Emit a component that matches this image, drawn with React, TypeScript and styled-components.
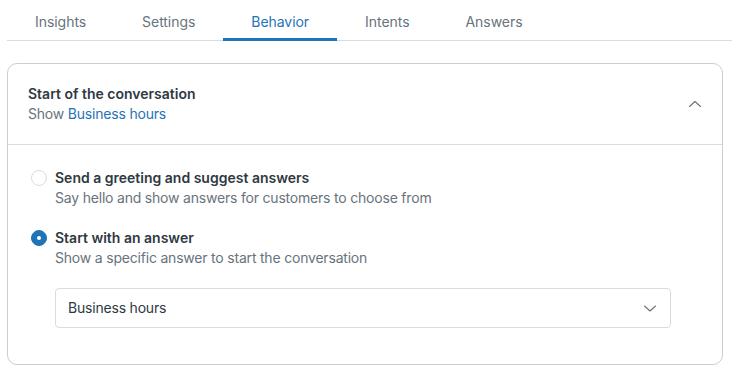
import styled, { createGlobalStyle } from "styled-components";

const GlobalStyle = createGlobalStyle`
  body {
    margin: 0;
    background: #fff;
    font-family: Inter, "Noto Sans", sans-serif;
    font-size: 14px;
    line-height: 20px;
    color: #2f3941;
    letter-spacing: -0.2px;
  }
`;

const Page = styled.div`
  padding: 0 9px 0 7px;
`;

const TabList = styled.div`
  display: flex;
  height: 41px;
  margin-right: -9px;
  border-bottom: 1px solid #d8dcde;
  box-sizing: border-box;
`;

const Tab = styled.div<{ $active?: boolean }>`
  display: flex;
  align-items: center;
  padding: 5px 28px 0;
  margin-bottom: -1px;
  letter-spacing: -0.05px;
  color: ${(p) => (p.$active ? "#1f73b7" : "#68737d")};
  border-bottom: 3px solid ${(p) => (p.$active ? "#1f73b7" : "transparent")};
`;

const Card = styled.div`
  margin-top: 22px;
  border: 1px solid #c9ced2;
  border-radius: 10px;
  overflow: hidden;
`;

const Header = styled.div`
  display: flex;
  align-items: center;
  justify-content: space-between;
  padding: 20px 19px 20px 20px;
  border-bottom: 1px solid #d8dcde;
`;

const Title = styled.div`
  font-weight: 600;
  letter-spacing: 0;
  color: #2f3941;
`;

const Sub = styled.div`
  color: #68737d;
`;

const Link = styled.span`
  color: #1f73b7;
`;

const Body = styled.div`
  display: flex;
  flex-direction: column;
  gap: 20px;
  padding: 23px 51px 36px 23px;
`;

const Option = styled.label`
  display: grid;
  grid-template-columns: 16px 1fr;
  column-gap: 8px;
  align-items: center;
`;

const Radio = styled.span<{ $checked?: boolean }>`
  width: 16px;
  height: 16px;
  border-radius: 50%;
  box-sizing: border-box;
  border: 1px solid ${(p) => (p.$checked ? "#1f73b7" : "#d8dcde")};
  background: ${(p) => (p.$checked ? "#1f73b7" : "#fff")};
  display: flex;
  align-items: center;
  justify-content: center;
  &::after {
    content: "";
    width: 4px;
    height: 4px;
    border-radius: 50%;
    background: ${(p) => (p.$checked ? "#fff" : "transparent")};
  }
`;

const OptionLabel = styled.span`
  font-weight: 600;
  letter-spacing: 0;
`;

const OptionHint = styled.span`
  grid-column: 2;
  color: #68737d;
`;

const Select = styled.div`
  margin-left: 24px;
  height: 40px;
  box-sizing: border-box;
  border: 1px solid #d8dcde;
  border-radius: 4px;
  display: flex;
  align-items: center;
  justify-content: space-between;
  padding: 0 12px 0 12px;
  color: #2f3941;
`;

const Chevron = ({ up }: { up?: boolean }) => (
  <svg width="16" height="16" viewBox="0 0 16 16" fill="none">
    <path
      d={up ? "M2.5 10.5l5.5-5 5.5 5" : "M2.5 6l5.5 5 5.5-5"}
      stroke="#68737d"
      strokeWidth="1.1"
      strokeLinecap="round"
      strokeLinejoin="round"
    />
  </svg>
);

const tabs = ["Insights", "Settings", "Behavior", "Intents", "Answers"];

export default function App() {
  return (
    <>
      <GlobalStyle />
      <Page>
        <TabList>
          {tabs.map((t) => (
            <Tab key={t} $active={t === "Behavior"}>
              {t}
            </Tab>
          ))}
        </TabList>
        <Card>
          <Header>
            <div>
              <Title>Start of the conversation</Title>
              <Sub>
                Show <Link>Business hours</Link>
              </Sub>
            </div>
            <Chevron up />
          </Header>
          <Body>
            <Option>
              <Radio />
              <OptionLabel>Send a greeting and suggest answers</OptionLabel>
              <OptionHint>Say hello and show answers for customers to choose from</OptionHint>
            </Option>
            <Option>
              <Radio $checked />
              <OptionLabel>Start with an answer</OptionLabel>
              <OptionHint>Show a specific answer to start the conversation</OptionHint>
            </Option>
            <Select>
              Business hours
              <Chevron />
            </Select>
          </Body>
        </Card>
      </Page>
    </>
  );
}
